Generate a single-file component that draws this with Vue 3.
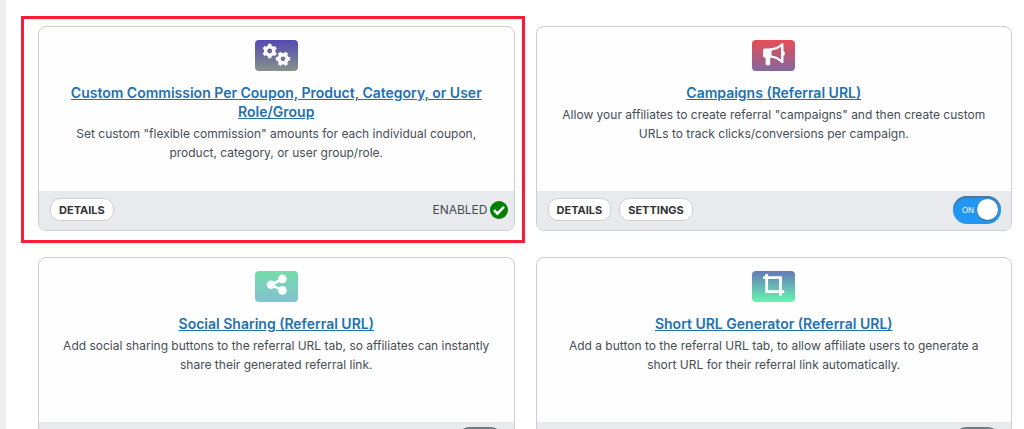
<script setup>
import { ref } from 'vue'

const cards = ref([
  {
    id: 'commission',
    title: 'Custom Commission Per Coupon, Product, Category, or User Role/Group',
    text: 'Set custom "flexible commission" amounts for each individual coupon, product, category, or user group/role.',
    highlighted: true,
    buttons: ['DETAILS'],
    locked: true,
    on: true,
  },
  {
    id: 'campaigns',
    title: 'Campaigns (Referral URL)',
    text: 'Allow your affiliates to create referral "campaigns" and then create custom URLs to track clicks/conversions per campaign.',
    buttons: ['DETAILS', 'SETTINGS'],
    on: true,
  },
  {
    id: 'sharing',
    title: 'Social Sharing (Referral URL)',
    text: 'Add social sharing buttons to the referral URL tab, so affiliates can instantly share their generated referral link.',
    buttons: [],
    on: false,
  },
  {
    id: 'shorturl',
    title: 'Short URL Generator (Referral URL)',
    text: 'Add a button to the referral URL tab, to allow affiliate users to generate a short URL for their referral link automatically.',
    buttons: [],
    on: false,
  },
])
</script>

<template>
  <main class="page">
    <div class="grid">
      <article v-for="card in cards" :key="card.id" class="card" :class="{ highlighted: card.highlighted }">
        <div class="body">
          <span class="tile" :class="card.id">
            <svg viewBox="0 0 43 31" aria-hidden="true">
              <g v-if="card.id === 'commission'" fill="none" stroke="#fff">
                <g transform="translate(14.7 11)">
                  <circle r="4.1" stroke-width="3.4" />
                  <path v-for="a in 6" :key="a" d="M0-5V-7.2" stroke-width="3.4" :transform="`rotate(${a * 60})`" />
                </g>
                <g transform="translate(28 18.8)">
                  <circle r="4.1" stroke-width="3.4" />
                  <path v-for="a in 6" :key="a" d="M0-5V-7.2" stroke-width="3.4" :transform="`rotate(${a * 60 + 30})`" />
                </g>
              </g>
              <g v-else-if="card.id === 'campaigns'" fill="#fff">
                <path d="M12.5 8.5H18V17.5H18.2V24.2Q18.2 25.2 17.2 25.2H14.6Q13.6 25.2 13.6 24.2V17.5H12.5Q11 17.5 11 16V10Q11 8.5 12.5 8.5Z" />
                <path fill-rule="evenodd" d="M17 8.5Q25 8.2 29.4 3.5Q31.5 2.4 31.5 4.5V11Q33 11.6 33 13.4T31.5 15.8V21.8Q31.5 24 29.4 22.8Q25 18 17 17.5ZM19.5 10.8V15.4Q25 16 29 19.4V6.8Q25 10.2 19.5 10.8Z" />
              </g>
              <g v-else-if="card.id === 'sharing'" fill="#fff" stroke="#fff">
                <path d="M27.3 8L16 13.8L27.3 19.4" fill="none" stroke-width="2.6" />
                <circle cx="16" cy="13.8" r="4.3" stroke="none" />
                <circle cx="27.3" cy="8" r="4.4" stroke="none" />
                <circle cx="27.3" cy="19.4" r="4.4" stroke="none" />
              </g>
              <path v-else d="M14.7 3V20.7H32.3M11.2 6.6H28.5V24.8" fill="none" stroke="#fff" stroke-width="2.8" />
            </svg>
          </span>
          <h2><a href="#">{{ card.title }}</a></h2>
          <p>{{ card.text }}</p>
        </div>
        <footer>
          <div class="actions">
            <button v-for="b in card.buttons" :key="b" type="button">{{ b }}</button>
          </div>
          <div v-if="card.locked" class="enabled">
            <span>ENABLED</span>
            <svg viewBox="0 0 18 18" aria-hidden="true">
              <circle cx="9" cy="9" r="9" fill="#008000" />
              <path d="M4 9.2L7.4 12.6L14 5.8" fill="none" stroke="#fff" stroke-width="2.6" />
            </svg>
          </div>
          <label v-else class="toggle">
            <input v-model="card.on" type="checkbox" :aria-label="card.title" />
            <span class="track"><span class="state">{{ card.on ? 'ON' : '' }}</span><span class="knob"></span></span>
          </label>
        </footer>
      </article>
    </div>
  </main>
</template>

<style scoped>
* {
  box-sizing: border-box;
}
.page {
  height: 100vh;
  overflow: hidden;
  padding: 26px 12px 0 32px;
  border-left: 6px solid #f0f0f0;
  background: #fff;
  color: #464d54;
  font-family: Inter, "Liberation Sans", sans-serif;
}
.grid {
  display: grid;
  grid-template-columns: 1fr 1fr;
  gap: 26px 21px;
}
.card {
  position: relative;
  display: flex;
  flex-direction: column;
  min-height: 205px;
  border: 1px solid #ccced2;
  border-radius: 8px;
  background: #fefefe;
}
.highlighted::after {
  content: "";
  position: absolute;
  inset: -11px -11px -13px -18px;
  border: 3px solid #fb1c38;
  pointer-events: none;
}
.body {
  flex: 1;
  padding: 13px 18px 12px;
  text-align: center;
}
.tile {
  display: block;
  width: 43px;
  height: 31px;
  margin: 0 auto 12px;
  border-radius: 4px;
}
.tile svg {
  display: block;
  width: 100%;
  height: 100%;
}
.commission {
  background: linear-gradient(#5449b4, #87928a);
}
.campaigns {
  background: linear-gradient(#ea4c55, #8168a0);
}
.sharing {
  background: linear-gradient(#74dda8, #83c0d2);
}
.shorturl {
  background: linear-gradient(#6478b8, #68f5b0);
}
h2 {
  margin: 0 0 3px;
  font-size: 14px;
  line-height: 19px;
  font-weight: 600;
}
a {
  color: #2271b1;
  text-decoration: underline;
}
p {
  margin: 0;
  font-size: 12px;
  line-height: 19px;
}
footer {
  display: flex;
  align-items: center;
  justify-content: space-between;
  height: 39px;
  padding: 0 10px 2px 11px;
  border-radius: 0 0 7px 7px;
  background: #e9eaee;
}
.actions {
  display: flex;
  gap: 8px;
}
button {
  height: 23px;
  padding: 0 8px;
  border: 1px solid #ccced2;
  border-radius: 10px;
  background: #fff;
  color: #333;
  font: 700 11px/20px Inter, "Liberation Sans", sans-serif;
}
.enabled {
  display: flex;
  align-items: center;
  gap: 2px;
  margin-right: -4px;
  font-size: 12px;
}
.enabled svg {
  width: 18px;
  height: 18px;
}
.toggle {
  position: relative;
}
.toggle input {
  position: absolute;
  inset: 0;
  margin: 0;
  opacity: 0;
}
.track {
  display: flex;
  align-items: center;
  justify-content: space-between;
  width: 48px;
  height: 28px;
  padding: 0 3px 0 9px;
  border-radius: 14px;
  background: #2196f3;
  box-shadow: inset 0 2px 1px #52758f;
  color: #fff;
  font-size: 8px;
}
.knob {
  width: 21px;
  height: 21px;
  border-radius: 50%;
  background: #fff;
  box-shadow: 0 1px 1px #4a6580;
}
input:not(:checked) + .track {
  flex-direction: row-reverse;
  padding: 0 9px 0 3px;
  background: #ccc;
  box-shadow: inset 0 2px 1px #6b7b86;
}
</style>
